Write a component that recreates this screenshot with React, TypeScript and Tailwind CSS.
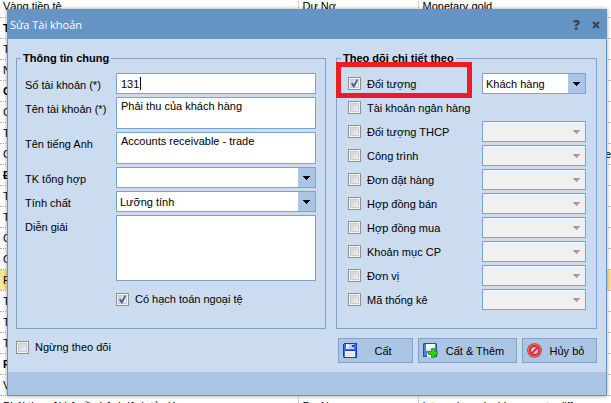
import React, { FC } from 'react';
import clsx from 'clsx';

interface AccountRow {
  name: string;
  kind?: string;
  english?: string;
  bold?: boolean;
  active?: boolean;
}

interface DetailOption {
  id: string;
  label: string;
  checked?: boolean;
  value?: string;
  noSelect?: boolean;
}

const accountRows: Array<AccountRow> = [
  { name: 'Vàng tiền tệ', kind: 'Dư Nợ', english: 'Monetary gold' },
  { name: 'T', bold: true },
  { name: 'T' },
  { name: 'N' },
  { name: 'C', bold: true },
  { name: 'C' },
  { name: 'T' },
  { name: 'C', english: 'e' },
  { name: 'Đ', bold: true },
  { name: 'T' },
  { name: 'T' },
  { name: 'C' },
  { name: 'C' },
  { name: 'P', active: true },
  { name: 'T' },
  { name: 'T' },
  { name: 'T' },
  { name: 'P', bold: true },
  { name: 'V' },
  {
    name: 'Phải thu nội bộ về chênh lệch tỷ giá',
    kind: 'Dư Nợ',
    english: 'Internal receivables on rate diff',
  },
];

const detailOptions: Array<DetailOption> = [
  { id: 'object', label: 'Đối tượng', checked: true, value: 'Khách hàng' },
  { id: 'bank', label: 'Tài khoản ngân hàng', noSelect: true },
  { id: 'thcp', label: 'Đối tượng THCP' },
  { id: 'project', label: 'Công trình' },
  { id: 'order', label: 'Đơn đặt hàng' },
  { id: 'sale', label: 'Hợp đồng bán' },
  { id: 'purchase', label: 'Hợp đồng mua' },
  { id: 'expense', label: 'Khoản mục CP' },
  { id: 'unit', label: 'Đơn vị' },
  { id: 'stat', label: 'Mã thống kê' },
];

const AccountTable: FC = () => {
  return (
    <table className="-mt-1 w-full table-fixed border-collapse">
      <colgroup>
        <col className="w-[298px]" />
        <col className="w-[120px]" />
        <col />
      </colgroup>
      <tbody>
        {accountRows.map((row, idx) => (
          <tr
            key={idx}
            className={clsx(
              'h-[21px] border-b border-dotted border-[#b4b4b4]',
              row.active && 'bg-[#ffe39b]',
              row.bold && 'font-bold'
            )}
          >
            <td className="overflow-hidden border-r border-dotted border-[#b4b4b4] p-0 pl-[3px] leading-5 whitespace-nowrap">
              {row.name}
            </td>
            <td className="border-r border-dotted border-[#b4b4b4] p-0 pl-1 leading-5">{row.kind}</td>
            <td
              className={clsx(
                'overflow-hidden p-0 pl-1 leading-5 whitespace-nowrap',
                row.english === 'e' && 'text-right'
              )}
            >
              {row.english}
            </td>
          </tr>
        ))}
      </tbody>
    </table>
  );
};

interface CheckBoxProps {
  id: string;
  label: string;
  checked?: boolean;
}

const CheckBox: FC<CheckBoxProps> = ({ id, label, checked = false }) => {
  return (
    <div className="flex items-center gap-[6px]">
      <span className="relative block size-[13px] shrink-0">
        <input
          id={id}
          type="checkbox"
          defaultChecked={checked}
          className="peer block size-[13px] appearance-none border border-[#8e8f8f] bg-linear-to-br from-[#c6c9cf] to-[#f6f6f6] shadow-[inset_0_0_0_1px_#f4f4f4,inset_0_0_0_2px_#c9ccd2]"
        />
        <svg
          viewBox="0 0 13 13"
          className="pointer-events-none absolute inset-0 hidden size-[13px] peer-checked:block"
        >
          <path d="M3 6.2 L4.6 5.4 L5.7 7.6 L8.6 2.6 L10.4 2.6 L6.4 10.4 L5.2 10.4 Z" fill="#4a5f97" />
        </svg>
      </span>
      <label htmlFor={id} className="whitespace-nowrap">
        {label}
      </label>
    </div>
  );
};

interface DropDownProps {
  id?: string;
  label?: string;
  value?: string;
  disabled?: boolean;
}

const DropDown: FC<DropDownProps> = ({ id, label, value = '', disabled = false }) => {
  return (
    <div className="relative h-[21px] w-full">
      <select
        id={id}
        aria-label={label}
        disabled={disabled}
        defaultValue={value}
        className={clsx(
          'block h-full w-full appearance-none border border-[#7da2ce] pl-[3px]',
          disabled ? 'bg-[#f0f0f0]' : 'bg-white'
        )}
      >
        <option value={value}>{value}</option>
      </select>
      <span
        className={clsx(
          'pointer-events-none absolute inset-y-px right-px flex w-[17px] items-center justify-center',
          disabled ? 'text-[#9d9d9d]' : 'bg-[#abc6e5] text-black'
        )}
      >
        <svg viewBox="0 0 7 4" className="h-1 w-[7px]" shapeRendering="crispEdges">
          <path d="M0 0 H7 V1 H6 V2 H5 V3 H4 V4 H3 V3 H2 V2 H1 V1 H0 Z" fill="currentColor" />
        </svg>
      </span>
    </div>
  );
};

interface FieldProps {
  id: string;
  label: string;
  children: React.ReactNode;
}

const Field: FC<FieldProps> = ({ id, label, children }) => {
  return (
    <div className="flex">
      <label htmlFor={id} className="h-[21px] w-[91px] shrink-0 leading-6">
        {label}
      </label>
      <div className="relative min-w-0 flex-1">{children}</div>
    </div>
  );
};

const SaveIcon: FC = () => (
  <svg viewBox="0 0 15 15" className="size-[15px] shrink-0">
    <path d="M0 1 H1 V0 H14 V15 H1 L0 14 Z" fill="#1238d0" />
    <path d="M1 1 H13 V14 H1 Z" fill="#3f6cf2" />
    <path d="M3 1 H11 V6 H3 Z" fill="#b9cdf3" />
    <path d="M3 1 H6 V6 H3 Z" fill="#e4ecfb" />
    <path d="M9 2 H11 V4 H9 Z" fill="#1c3fae" />
    <path d="M2 8 H12 V14 H2 Z" fill="#f3f3f3" />
    <path d="M3 10.5 H11 M3 12.5 H11" stroke="#d3d6dc" strokeWidth="1" />
    <path d="M2 7.5 H12" stroke="#1238d0" strokeWidth="1" />
  </svg>
);

const SaveAddIcon: FC = () => (
  <svg viewBox="0 0 15 15" className="size-[15px] shrink-0">
    <path d="M0 1 L1 0 H13 L14 1 V14 H0 Z" fill="#2b4f9c" />
    <path d="M1 1 H13 V13 H1 Z" fill="#4f7ed2" />
    <path d="M3 1 H12 V8 H3 Z" fill="#f4f7fd" />
    <path d="M3 6 H12 V8 H3 Z" fill="#d5dff0" />
    <path d="M4 10 H9 V14 H4 Z" fill="#e7ebf3" />
    <path d="M8.5 5.5 H11.5 V8.5 H14.5 V11.5 H11.5 V14.5 H8.5 V11.5 H5.5 V8.5 H8.5 Z" fill="#2fd11f" stroke="#22a822" strokeWidth="1" />
  </svg>
);

const CancelIcon: FC = () => (
  <svg viewBox="0 0 15 15" className="size-[15px] shrink-0">
    <circle cx="7.5" cy="7.5" r="7.3" fill="#d3222a" />
    <circle cx="7.5" cy="7.5" r="6" fill="none" stroke="#f2696c" strokeWidth="1.2" />
    <circle cx="7.5" cy="7.5" r="4" fill="#cddbee" stroke="#c8252c" strokeWidth="1" />
    <path d="M4.4 10.6 L10.6 4.4" stroke="#dc383e" strokeWidth="2.2" />
  </svg>
);

interface ActionButtonProps {
  icon: React.ReactNode;
  label: string;
  cn: string;
}

const ActionButton: FC<ActionButtonProps> = ({ icon, label, cn }) => {
  return (
    <button
      type="button"
      className={clsx('flex h-[25px] items-center border border-[#7da2ce] bg-[#abc6e5] px-1', cn)}
    >
      {icon}
      <span className="flex-1 text-center whitespace-nowrap">{label}</span>
    </button>
  );
};

const inputStyle = 'block w-full resize-none border border-[#7da2ce] bg-white px-1';
const legendStyle = 'px-[2px] leading-4 font-bold text-black';

const GeneralInfo: FC = () => {
  return (
    <fieldset className="min-w-0 flex-1 border border-[#7da2ce] px-1">
      <legend className={legendStyle}>Thông tin chung</legend>
      <div className="flex flex-col gap-[3px] pt-[7px] pr-[5px] pb-5 pl-1">
        <Field id="code" label="Số tài khoản (*)">
          <input id="code" type="text" defaultValue="131" className={clsx(inputStyle, 'h-[21px]')} />
          <span className="pointer-events-none absolute top-1 left-6 h-[13px] w-px bg-black" />
        </Field>
        <Field id="name" label="Tên tài khoản (*)">
          <textarea id="name" defaultValue="Phải thu của khách hàng" className={clsx(inputStyle, 'h-8 leading-4')} />
        </Field>
        <Field id="english" label="Tên tiếng Anh">
          <textarea id="english" defaultValue="Accounts receivable - trade" className={clsx(inputStyle, 'h-8 leading-4')} />
        </Field>
        <Field id="parent" label="TK tổng hợp">
          <DropDown id="parent" />
        </Field>
        <Field id="nature" label="Tính chất">
          <DropDown id="nature" value="Lưỡng tính" />
        </Field>
        <Field id="note" label="Diễn giải">
          <textarea id="note" className={clsx(inputStyle, 'h-[66px] leading-4')} />
        </Field>
        <div className="pt-[6px] pl-[91px] leading-[18px]">
          <CheckBox id="foreign" label="Có hạch toán ngoại tệ" checked />
        </div>
      </div>
    </fieldset>
  );
};

const DetailTracking: FC = () => {
  return (
    <fieldset className="relative w-[261px] shrink-0 border border-[#7da2ce] px-1">
      <legend className={legendStyle}>Theo dõi chi tiết theo</legend>
      <div className="flex flex-col gap-[3px] pt-[7px] pr-[6px] pl-[7px]">
        {detailOptions.map((option) => (
          <div key={option.id} className="flex h-[21px] items-center justify-between">
            <CheckBox id={option.id} label={option.label} checked={option.checked} />
            {!option.noSelect && (
              <div className="w-[104px]">
                <DropDown label={option.label} value={option.value} disabled={!option.checked} />
              </div>
            )}
          </div>
        ))}
      </div>
      {/* highlight around the first option */}
      <div className="pointer-events-none absolute -top-1 -left-px h-9 w-[136px] border-5 border-[#ed1c24]" />
    </fieldset>
  );
};

const EditAccountDialog: FC = () => {
  return (
    <div
      role="dialog"
      aria-labelledby="dialog-title"
      className="absolute top-[9px] right-1 left-[7px] border border-[#6595c6] bg-[#cbdbf0] shadow-[0_0_4px_rgba(0,0,0,0.4)]"
    >
      <header className="flex h-[29px] items-center bg-[#6595c6] pr-[6px] pl-[2px]">
        <h1
          id="dialog-title"
          className="flex-1 font-['Open_Sans','Noto_Sans',sans-serif] leading-4 text-white"
        >
          Sửa Tài khoản
        </h1>
        <button
          type="button"
          aria-label="Trợ giúp"
          className="mr-3 font-['Open_Sans','Noto_Sans',sans-serif] text-sm leading-4 font-extrabold text-[#3c4450]"
        >
          ?
        </button>
        <button type="button" aria-label="Đóng" className="text-[#3c4450]">
          <svg viewBox="0 0 8 8" className="size-2">
            <path d="M1 1 L7 7 M7 1 L1 7" stroke="currentColor" strokeWidth="2.2" />
          </svg>
        </button>
      </header>
      <form className="pt-[11px] pr-[9px] pl-2">
        <div className="flex gap-[10px]">
          <GeneralInfo />
          <DetailTracking />
        </div>
        <div className="flex items-start justify-between pt-[9px] pb-[9px] leading-[18px]">
          <CheckBox id="stop" label="Ngừng theo dõi" />
          <div className="flex gap-[5px]">
            <ActionButton icon={<SaveIcon />} label="Cất" cn="w-[75px]" />
            <ActionButton icon={<SaveAddIcon />} label="Cất & Thêm" cn="w-[99px]" />
            <ActionButton icon={<CancelIcon />} label="Hủy bỏ" cn="w-[75px]" />
          </div>
        </div>
      </form>
      <footer className="h-[23px] bg-[#abc6e5]" />
    </div>
  );
};

const App: FC = () => {
  return (
    <main className="relative h-screen overflow-hidden bg-white font-['Liberation_Sans',Arial,sans-serif] text-[11px] leading-4 text-black">
      <AccountTable />
      <EditAccountDialog />
    </main>
  );
};

export default App;
